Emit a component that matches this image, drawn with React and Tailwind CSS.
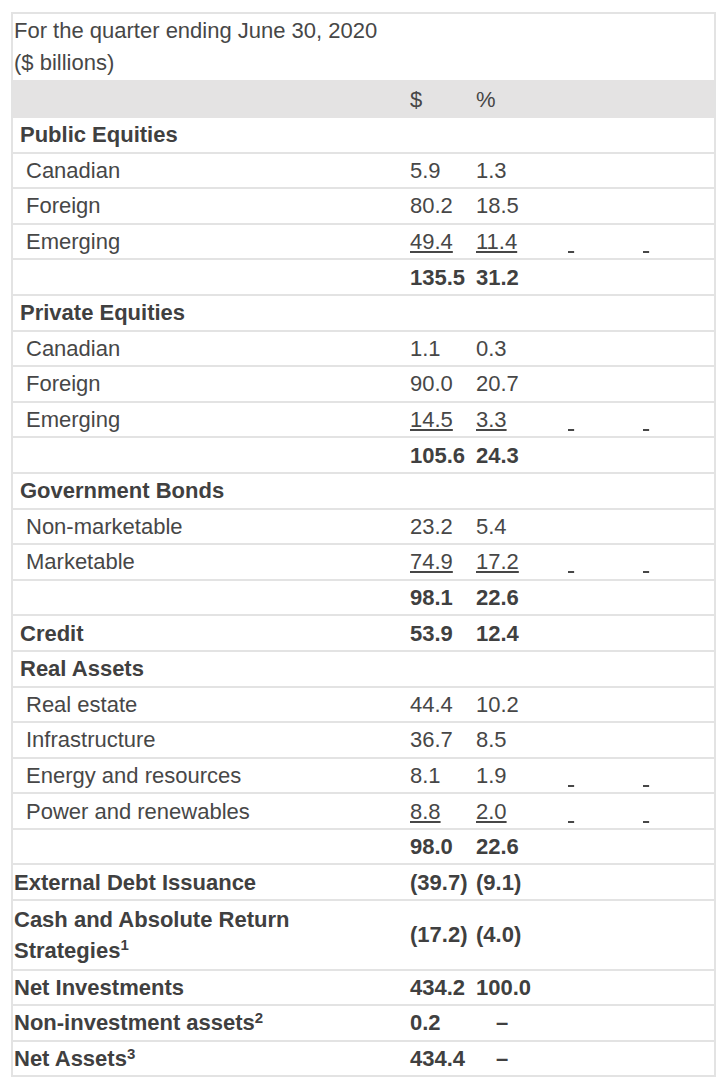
import React from "react";

const rows = [
  { t: "section", label: "Public Equities" },
  { t: "item", label: "Canadian", v: ["5.9", "1.3"] },
  { t: "item", label: "Foreign", v: ["80.2", "18.5"] },
  { t: "item", label: "Emerging", v: ["49.4", "11.4"], u: true, m: true },
  { t: "total", v: ["135.5", "31.2"] },
  { t: "section", label: "Private Equities" },
  { t: "item", label: "Canadian", v: ["1.1", "0.3"] },
  { t: "item", label: "Foreign", v: ["90.0", "20.7"] },
  { t: "item", label: "Emerging", v: ["14.5", "3.3"], u: true, m: true },
  { t: "total", v: ["105.6", "24.3"] },
  { t: "section", label: "Government Bonds" },
  { t: "item", label: "Non-marketable", v: ["23.2", "5.4"] },
  { t: "item", label: "Marketable", v: ["74.9", "17.2"], u: true, m: true },
  { t: "total", v: ["98.1", "22.6"] },
  { t: "section", label: "Credit", v: ["53.9", "12.4"] },
  { t: "section", label: "Real Assets" },
  { t: "item", label: "Real estate", v: ["44.4", "10.2"] },
  { t: "item", label: "Infrastructure", v: ["36.7", "8.5"] },
  { t: "item", label: "Energy and resources", v: ["8.1", "1.9"], m: true },
  { t: "item", label: "Power and renewables", v: ["8.8", "2.0"], u: true, m: true },
  { t: "total", v: ["98.0", "22.6"] },
  { t: "bottom", label: "External Debt Issuance", v: ["(39.7)", "(9.1)"] },
  { t: "bottom2", v: ["(17.2)", "(4.0)"] },
  { t: "bottom", label: "Net Investments", v: ["434.2", "100.0"] },
  { t: "bottom", label: "Non-investment assets", sup: "2", v: ["0.2"], dash: true },
  { t: "bottom", label: "Net Assets", sup: "3", v: ["434.4"], dash: true },
];

const grid = "grid grid-cols-[390px_66px_92px_75px_1fr]";

function Mark() {
  return <span className="underline">&nbsp;</span>;
}

function Row({ r }) {
  const bold = r.t !== "item";
  const h = r.t === "bottom2" ? "h-[69.5px]" : "h-[35.6px]";
  let labelPad = "pl-[7px]";
  if (r.t === "item") labelPad = "pl-[13px]";
  if (r.t === "bottom" || r.t === "bottom2") labelPad = "pl-[1px]";
  return (
    <div className={`${grid} ${h} items-center border-b-2 border-[#e3e3e3] ${bold ? "font-bold text-[#404040]" : ""}`}>
      <div className={`${labelPad} leading-[31px]`}>
        {r.t === "bottom2" ? (
          <>
            Cash and Absolute Return
            <br />
            Strategies<sup className="text-[15px]">1</sup>
          </>
        ) : (
          <>
            {r.label}
            {r.sup && <sup className="text-[15px]">{r.sup}</sup>}
          </>
        )}
      </div>
      <div className="pl-[7px] whitespace-nowrap">
        {r.v && <span className={r.u ? "underline" : ""}>{r.v[0]}</span>}
      </div>
      <div className="pl-[7px] whitespace-nowrap">
        {r.v && r.v[1] && <span className={r.u ? "underline" : ""}>{r.v[1]}</span>}
        {r.dash && <span className="pl-[20px]">–</span>}
      </div>
      <div className="pl-[7px]">{r.m && <Mark />}</div>
      <div className="pl-[7px]">{r.m && <Mark />}</div>
    </div>
  );
}

export default function App() {
  return (
    <div className="bg-white w-[726px] h-[1081px] overflow-hidden pt-[12px] pl-[11px] font-['Liberation_Sans',Arial,sans-serif] text-[22px] text-[#474747]">
      <div className="w-[705px] border-2 border-b-0 border-[#e3e3e3]">
        <div className="h-[66px] pt-[1px] pl-[1px] leading-[32px]">
          For the quarter ending June 30, 2020
          <br />
          ($ billions)
        </div>
        <div className={`${grid} h-[38px] items-center bg-[#e4e3e3]`}>
          <div></div>
          <div className="pl-[7px]">$</div>
          <div className="pl-[7px]">%</div>
          <div></div>
          <div></div>
        </div>
        {rows.map((r, i) => (
          <Row key={i} r={r} />
        ))}
      </div>
    </div>
  );
}
